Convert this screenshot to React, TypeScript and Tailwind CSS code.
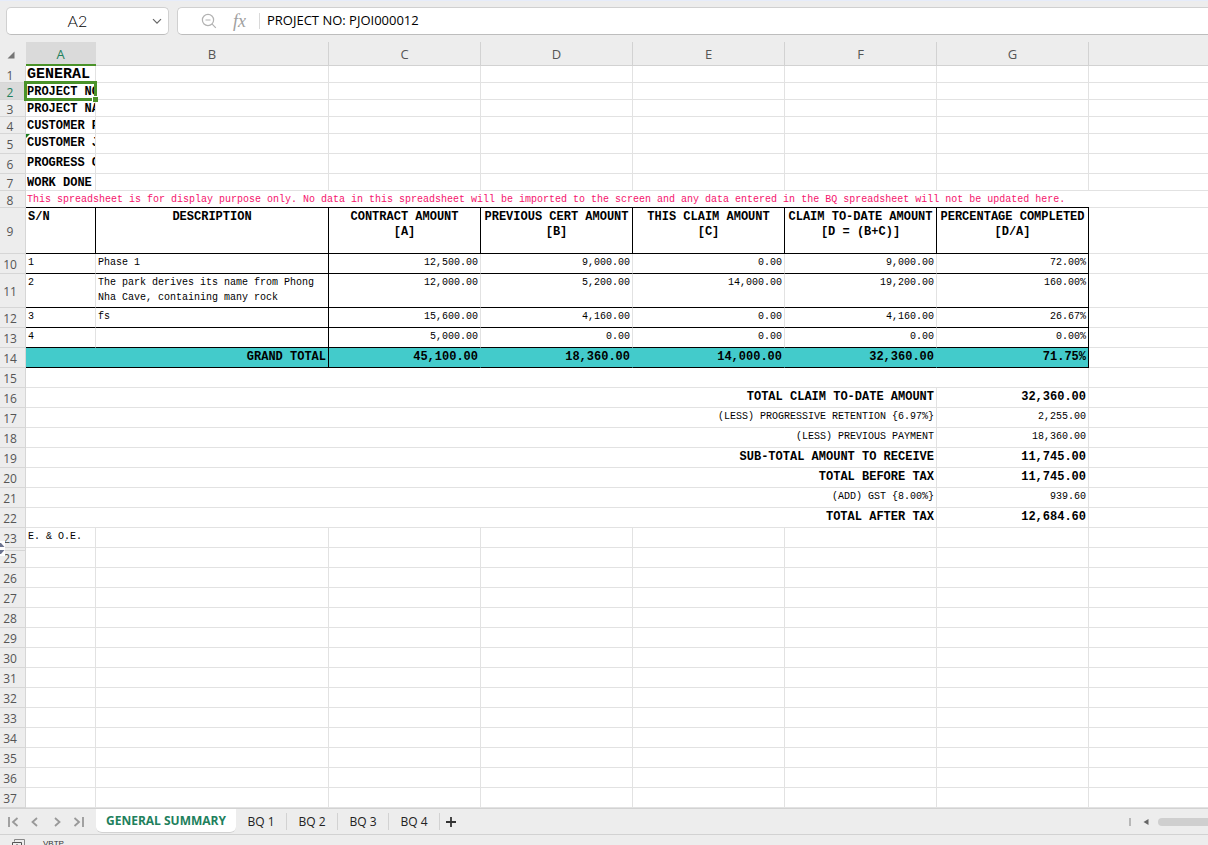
import React, { useState } from "react";
import clsx from "clsx";

interface ClaimItem {
  row: number;
  height: string;
  no: string;
  description: string;
  amounts: string[];
}

interface SummaryLine {
  row: number;
  label: string;
  value: string;
  strong?: boolean;
}

const COLUMNS = ["A", "B", "C", "D", "E", "F", "G"];
const SHEETS = ["GENERAL SUMMARY", "BQ 1", "BQ 2", "BQ 3", "BQ 4"];

const INFO_ROWS = [
  { row: 1, height: "h-[17px]", text: "GENERAL" },
  { row: 2, height: "h-[17px]", text: "PROJECT NO" },
  { row: 3, height: "h-[17px]", text: "PROJECT NA" },
  { row: 4, height: "h-[17px]", text: "CUSTOMER P" },
  { row: 5, height: "h-5", text: "CUSTOMER J" },
  { row: 6, height: "h-5", text: "PROGRESS C" },
  { row: 7, height: "h-[17px]", text: "WORK DONE" },
];

const HEADINGS = [
  ["CONTRACT AMOUNT", "[A]"],
  ["PREVIOUS CERT AMOUNT", "[B]"],
  ["THIS CLAIM AMOUNT", "[C]"],
  ["CLAIM TO-DATE AMOUNT", "[D = (B+C)]"],
  ["PERCENTAGE COMPLETED", "[D/A]"],
];

const ITEMS: ClaimItem[] = [
  {
    row: 10,
    height: "h-5",
    no: "1",
    description: "Phase 1",
    amounts: ["12,500.00", "9,000.00", "0.00", "9,000.00", "72.00%"],
  },
  {
    row: 11,
    height: "h-[34px]",
    no: "2",
    description: "The park derives its name from Phong Nha Cave, containing many rock",
    amounts: ["12,000.00", "5,200.00", "14,000.00", "19,200.00", "160.00%"],
  },
  {
    row: 12,
    height: "h-5",
    no: "3",
    description: "fs",
    amounts: ["15,600.00", "4,160.00", "0.00", "4,160.00", "26.67%"],
  },
  {
    row: 13,
    height: "h-5",
    no: "4",
    description: "",
    amounts: ["5,000.00", "0.00", "0.00", "0.00", "0.00%"],
  },
];

const TOTALS = ["45,100.00", "18,360.00", "14,000.00", "32,360.00", "71.75%"];

const SUMMARY: SummaryLine[] = [
  { row: 16, label: "TOTAL CLAIM TO-DATE AMOUNT", value: "32,360.00", strong: true },
  { row: 17, label: "(LESS) PROGRESSIVE RETENTION {6.97%}", value: "2,255.00" },
  { row: 18, label: "(LESS) PREVIOUS PAYMENT", value: "18,360.00" },
  { row: 19, label: "SUB-TOTAL AMOUNT TO RECEIVE", value: "11,745.00", strong: true },
  { row: 20, label: "TOTAL BEFORE TAX", value: "11,745.00", strong: true },
  { row: 21, label: "(ADD) GST {8.00%}", value: "939.60" },
  { row: 22, label: "TOTAL AFTER TAX", value: "12,684.60", strong: true },
];

const EMPTY_ROWS = Array.from({ length: 13 }, (_, i) => i + 25);

const GRID = "border-[#e2e2e2]";
const CELL = "border-r border-b px-[2px] align-top";
const PLAIN = "pt-px";
const BOLD = "pt-[2px] text-[12px] font-bold";

const RowHeader: React.FC<{ row: number; active?: boolean }> = ({ row, active }) => (
  <th
    scope="row"
    className={clsx(
      "relative border-r border-b border-[#d6d6d6] pt-[3px] pr-[5px] align-middle font-['Open_Sans',sans-serif] text-[12px] leading-3 font-normal",
      active ? "bg-[#dadada] text-[#21805c]" : "bg-[#ededed] text-[#555555]"
    )}
  >
    {row}
    {row === 25 && (
      <>
        {/* row 24 is hidden */}
        <span className="absolute inset-x-0 top-[2px] h-px bg-[#d6d6d6]" />
        <button
          aria-label="Unhide row 24"
          className="absolute -top-[7px] left-0 flex h-[15px] w-[5px] items-center bg-white"
        >
          <svg width="5" height="11" viewBox="0 0 5 11" fill="#6b7390">
            <path d="M0 0h1l3.5 4H0zM0 7h4.5L1 11H0z" />
          </svg>
        </button>
      </>
    )}
  </th>
);

const EmptyCells: React.FC<{ count: number }> = ({ count }) => (
  <>
    {Array.from({ length: count }, (_, i) => (
      <td
        key={i}
        className={clsx("border-b", GRID, i < count - 1 && "border-r")}
      />
    ))}
  </>
);

const FormulaBar: React.FC = () => (
  <div className="flex h-[42px] shrink-0 gap-2 border-t border-[#e6ecfa] pt-1.5 pb-[7px] pl-1.5">
    <div className="flex w-[163px] items-center rounded-[5px] border border-[#d0d0d0] border-b-[#bdbdbd] bg-white pr-0.5">
      <input
        aria-label="Name box"
        defaultValue="A2"
        className="w-0 flex-1 bg-transparent text-center font-['Lato',sans-serif] text-[16px] font-light text-black outline-none"
      />
      <button aria-label="Show names" className="p-1">
        <svg width="10" height="7" viewBox="0 0 10 7" fill="none" stroke="#666" strokeWidth="1.2">
          <path d="M1 1.2l4 4 4-4" />
        </svg>
      </button>
    </div>
    <div className="flex flex-1 items-center rounded-l-[5px] border border-r-0 border-[#d0d0d0] border-b-[#bdbdbd] bg-white pl-[23px]">
      <button aria-label="Zoom out">
        <svg width="16" height="16" viewBox="0 0 16 16" fill="none" stroke="#b2b2b2" strokeWidth="1.2">
          <circle cx="7" cy="7" r="5.6" />
          <path d="M4.5 7h5M11.2 11.2l3.6 3.6" />
        </svg>
      </button>
      <button
        aria-label="Insert function"
        className="ml-4 w-5 text-left font-['Liberation_Serif',serif] text-[18px] leading-5 text-[#a0a0a0] italic"
      >
        fx
      </button>
      <span className="mr-[7px] ml-1.5 h-4 w-px bg-[#d9d9d9]" />
      <input
        aria-label="Formula"
        defaultValue="PROJECT NO: PJOI000012"
        className="flex-1 bg-transparent font-['Open_Sans',sans-serif] text-[13px] text-black outline-none"
      />
    </div>
  </div>
);

const SheetGrid: React.FC = () => (
  <table className="w-full shrink-0 table-fixed border-separate border-spacing-0 bg-white font-['Liberation_Mono',monospace] text-[10px] leading-[15px] text-black">
    <colgroup>
      <col className="w-[26px]" />
      <col className="w-[70px]" />
      <col className="w-[233px]" />
      <col className="w-[152px]" />
      <col className="w-[152px]" />
      <col className="w-[152px]" />
      <col className="w-[152px]" />
      <col className="w-[152px]" />
      <col />
    </colgroup>
    <thead>
      <tr className="h-6 bg-[#ededed] font-['Open_Sans',sans-serif] text-[13px]">
        <td className="border-b border-[#ededed]">
          <svg width="8" height="8" viewBox="0 0 8 8" className="mt-0.5 ml-[7px]" aria-label="Select all">
            <path d="M7.5 0.5v7h-7z" fill="#757575" />
          </svg>
        </td>
        {COLUMNS.map((name) => (
          <th
            key={name}
            scope="col"
            className={clsx(
              "pt-[2px] font-normal",
              name === "A"
                ? "border-b-2 border-[#4a9229] bg-[#dadada] pr-px text-[#21805c]"
                : "border-r border-b border-[#d2d2d2] text-[#555555]"
            )}
          >
            {name}
          </th>
        ))}
        <td className="border-b border-[#d2d2d2]" />
      </tr>
    </thead>
    <tbody>
      {INFO_ROWS.map(({ row, height, text }) => (
        <tr key={row} className={height}>
          <RowHeader row={row} active={row === 2} />
          <td
            className={clsx(
              "relative border-r border-b pl-px align-top font-bold",
              GRID,
              row === 1 ? "text-[15px]" : "text-[12px]"
            )}
          >
            <div className="h-4 overflow-hidden pt-[2px] leading-[14px] whitespace-nowrap">
              {text}
            </div>
            {row === 2 && (
              <>
                <div className="absolute -top-0.5 -right-0.5 -bottom-0.5 -left-0.5 z-10 border-[3px] border-[#4a9229]" />
                <div className="absolute -right-[3px] -bottom-[3px] z-10 size-[6px] border-t border-l border-white bg-[#4a9229]" />
              </>
            )}
            {row === 5 && (
              <svg width="4" height="4" viewBox="0 0 4 4" className="absolute top-0 left-0">
                <path d="M0 0h4L0 4z" fill="#1c7c1c" />
              </svg>
            )}
          </td>
          <EmptyCells count={7} />
        </tr>
      ))}
      <tr className="h-[17px]">
        <RowHeader row={8} />
        <td
          colSpan={7}
          className="border-b border-black pt-px pl-px align-top whitespace-nowrap text-[#f5146c]"
        >
          This spreadsheet is for display purpose only. No data in this spreadsheet will be
          imported to the screen and any data entered in the BQ spreadsheet will not be updated
          here.
        </td>
        <EmptyCells count={1} />
      </tr>
      <tr className="h-[46px]">
        <RowHeader row={9} />
        <th scope="col" className={clsx(CELL, BOLD, "border-black text-left")}>
          S/N
        </th>
        <th scope="col" className={clsx(CELL, BOLD, "border-black")}>
          DESCRIPTION
        </th>
        {HEADINGS.map(([title, formula]) => (
          <th
            key={title}
            scope="col"
            className={clsx(CELL, BOLD, "border-black whitespace-nowrap")}
          >
            {title}
            <br />
            {formula}
          </th>
        ))}
        <EmptyCells count={1} />
      </tr>
      {ITEMS.map((item) => (
        <tr key={item.row} className={item.height}>
          <RowHeader row={item.row} />
          <td className={clsx(CELL, PLAIN, "border-r-[#e2e2e2] border-b-black")}>{item.no}</td>
          <td className={clsx(CELL, PLAIN, "border-black")}>{item.description}</td>
          {item.amounts.map((amount, i) => (
            <td
              key={i}
              className={clsx(
                CELL,
                PLAIN,
                "border-b-black text-right",
                i === item.amounts.length - 1 ? "border-r-black" : "border-r-[#e2e2e2]"
              )}
            >
              {amount}
            </td>
          ))}
          <EmptyCells count={1} />
        </tr>
      ))}
      <tr className="h-5 bg-[#43cbcb]">
        <RowHeader row={14} />
        <td colSpan={2} className={clsx(CELL, BOLD, "border-black text-right")}>
          GRAND TOTAL
        </td>
        {TOTALS.map((total, i) => (
          <td
            key={i}
            className={clsx(
              CELL,
              BOLD,
              "border-b-black text-right",
              i === TOTALS.length - 1 ? "border-r-black" : "border-r-[#43cbcb]"
            )}
          >
            {total}
          </td>
        ))}
        <td className={clsx("border-b bg-white", GRID)} />
      </tr>
      <tr className="h-5">
        <RowHeader row={15} />
        <td colSpan={7} className={clsx("border-r border-b", GRID)} />
        <EmptyCells count={1} />
      </tr>
      {SUMMARY.map(({ row, label, value, strong }) => (
        <tr key={row} className="h-5">
          <RowHeader row={row} />
          <td colSpan={6} className={clsx(CELL, GRID, "text-right", strong ? BOLD : PLAIN)}>
            {label}
          </td>
          <td className={clsx(CELL, GRID, "text-right", strong ? BOLD : PLAIN)}>{value}</td>
          <EmptyCells count={1} />
        </tr>
      ))}
      <tr className="h-5">
        <RowHeader row={23} />
        <td className={clsx(CELL, PLAIN, GRID, "whitespace-nowrap")}>E. &amp; O.E.</td>
        <EmptyCells count={7} />
      </tr>
      {EMPTY_ROWS.map((row) => (
        <tr key={row} className="h-5">
          <RowHeader row={row} />
          <EmptyCells count={8} />
        </tr>
      ))}
    </tbody>
  </table>
);

const NAV_ICONS = [
  { label: "First sheet", d: "M2 1v10M10.5 2L6 6l4.5 4" },
  { label: "Previous sheet", d: "M8 2L3.5 6 8 10" },
  { label: "Next sheet", d: "M4 2l4.5 4L4 10" },
  { label: "Last sheet", d: "M1.5 2L6 6l-4.5 4M10 1v10" },
];

const SheetTabs: React.FC = () => {
  const [current, setCurrent] = useState(SHEETS[0]);

  return (
    <div className="flex h-[27px] shrink-0 border-t border-b border-[#d2d2d2] font-['Open_Sans',sans-serif] text-[12px] text-[#222222]">
      <div className="flex w-24 items-center gap-2.5 pl-[7px]">
        {NAV_ICONS.map(({ label, d }) => (
          <button key={label} aria-label={label}>
            <svg width="12" height="12" viewBox="0 0 12 12" fill="none" stroke="#999" strokeWidth="1.8">
              <path d={d} />
            </svg>
          </button>
        ))}
      </div>
      <div role="tablist" className="flex">
        {SHEETS.map((sheet) => {
          const active = sheet === current;
          return (
            <button
              key={sheet}
              role="tab"
              aria-selected={active}
              onClick={() => setCurrent(sheet)}
              className={clsx(
                "flex items-center whitespace-nowrap",
                active
                  ? "mb-px rounded-b-md border-b border-[#d2d2d2] bg-white px-2.5 font-bold text-[#21805c]"
                  : "my-1 w-[51px] justify-center border-r border-[#d2d2d2]"
              )}
            >
              {sheet}
            </button>
          );
        })}
      </div>
      <button aria-label="Add sheet" className="px-1.5">
        <svg width="10" height="10" viewBox="0 0 10 10" stroke="#333" strokeWidth="1.8">
          <path d="M5 0v10M0 5h10" />
        </svg>
      </button>
      <div className="ml-auto flex items-center">
        <span className="h-2 w-[2px] bg-[#b8b8b8]" />
        <button aria-label="Scroll left" className="mr-[9px] ml-3">
          <svg width="6" height="6" viewBox="0 0 6 6" fill="#666">
            <path d="M5.5 0v6L0.5 3z" />
          </svg>
        </button>
        <span className="h-2 w-[50px] rounded-l-full bg-[#cfcfcf]" />
      </div>
    </div>
  );
};

const StatusBar: React.FC = () => (
  <div className="flex h-7 shrink-0 items-start gap-[18px] pt-1 pl-3">
    <svg width="13" height="14" viewBox="0 0 13 14" fill="none" stroke="#555">
      <path d="M2.5 2.5v-2h10v10h-2" stroke="#888" />
      <path d="M0.5 3.5h9v10h-9zM5 5v6M2 8h6" />
    </svg>
    <span className="font-['Liberation_Sans_Narrow','Liberation_Sans',sans-serif] text-[8px] leading-[9px] text-[#333]">
      VBTP
    </span>
  </div>
);

const App: React.FC = () => {
  return (
    <div className="flex h-screen flex-col overflow-hidden bg-[#ededed]">
      <FormulaBar />
      <SheetGrid />
      <SheetTabs />
      <StatusBar />
    </div>
  );
};

export default App;
